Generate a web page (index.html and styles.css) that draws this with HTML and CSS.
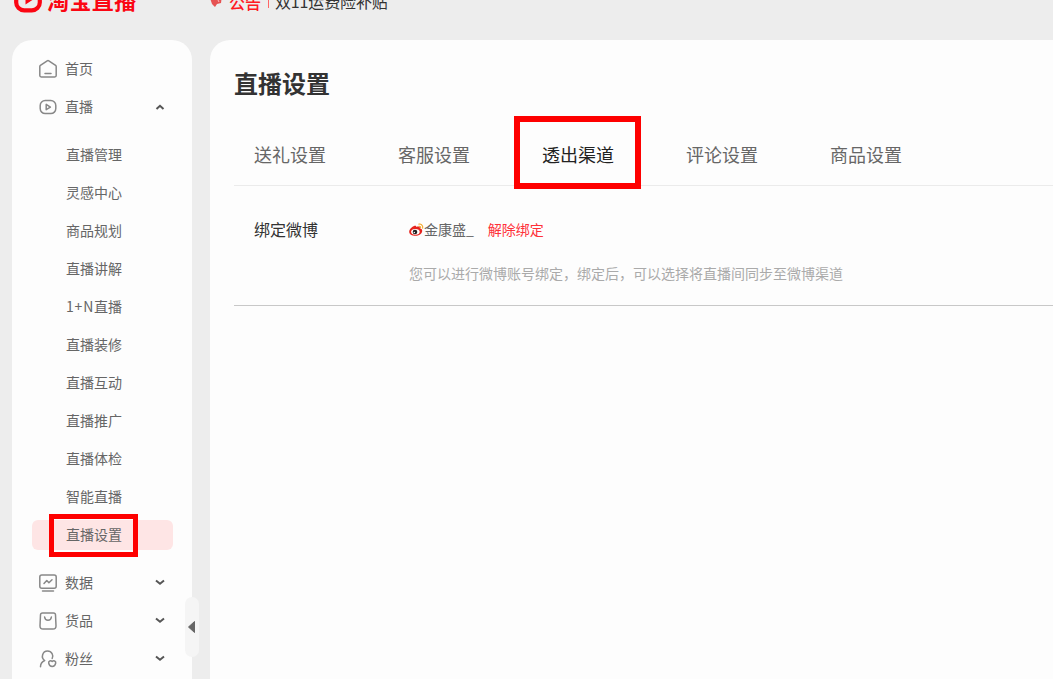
FILE: index.html
```html
<!DOCTYPE html>
<html lang="zh-CN">
<head>
<meta charset="utf-8">
<title>直播设置</title>
<link rel="stylesheet" href="styles.css">
</head>
<body>
<header class="topbar">
  <div class="brand">
    <svg class="brand-icon" width="28" height="26" viewBox="0 0 28 26"><rect x="2.2" y="2.2" width="23.6" height="21.2" rx="8" fill="none" stroke="#fb0613" stroke-width="4.2"/><path d="M11.500 7v10.500l8-5.200z" fill="#fb0613"/></svg>
    <span class="brand-name">淘宝直播</span>
  </div>
  <div class="notice">
    <svg class="notice-icon" width="14" height="14" viewBox="0 0 14 14"><path d="M0 4l12-3-1 8-4 1-2 3-3-3z" fill="#e65252"/><path d="M8 6l1 2" stroke="#fbb" stroke-width="1"/></svg>
    <b class="notice-tag">公告</b>
    <i class="notice-line"></i>
    <span class="notice-text">双11运费险补贴</span>
  </div>
</header>
<div class="layout">
  <aside class="sidebar">
    <nav>
      <a class="item"><svg class="icon" viewBox="0 0 20 20"><path d="M1.8 7.4Q1.8 6.7 2.4 6.3L9.2 1.8Q10 1.3 10.8 1.8L17.6 6.3Q18.2 6.7 18.2 7.4V16.6Q18.2 18 16.8 18H3.2Q1.8 18 1.8 16.600ZM7 14.500h6"/></svg><span class="text">首页</span></a>
      <a class="item"><svg class="icon" viewBox="0 0 20 20"><rect x="2.2" y="3.6" width="15.600" height="13" rx="5"/><path d="M8.200 7.400v5.300l4.200-2.600z"/></svg><span class="text">直播</span><svg class="arrow" viewBox="0 0 10 8"><path d="M1.500 6L5 2.800 8.500 6"/></svg></a>
      <div class="submenu">
        <a class="sub">直播管理</a>
        <a class="sub">灵感中心</a>
        <a class="sub">商品规划</a>
        <a class="sub">直播讲解</a>
        <a class="sub"><span class="latin">1+N</span>直播</a>
        <a class="sub">直播装修</a>
        <a class="sub">直播互动</a>
        <a class="sub">直播推广</a>
        <a class="sub">直播体检</a>
        <a class="sub">智能直播</a>
        <a class="sub active"><span>直播设置</span><i class="mark mark-menu"></i></a>
      </div>
      <a class="item"><svg class="icon" viewBox="0 0 20 20"><rect x="1.800" y="2" width="16.400" height="13.200" rx="2"/><path d="M6 10.500l2.800-3 2.100 2.200L14 6.700M4.500 17.900h11"/></svg><span class="text">数据</span><svg class="arrow" viewBox="0 0 10 8"><path d="M1 1.500L5 4.700l4-3.200"/></svg></a>
      <a class="item"><svg class="icon" viewBox="0 0 20 20"><path d="M4.500 1.900h11q1.900 0 2 1.900l.5 11q.1 3.300-3 3.300H5q-3.100 0-3-3.300l.5-11q.1-1.900 2-1.900zM6.600 6c.6 4.300 6.200 4.300 6.800 0"/></svg><span class="text">货品</span><svg class="arrow" viewBox="0 0 10 8"><path d="M1 1.500L5 4.700l4-3.200"/></svg></a>
      <a class="item"><svg class="icon" viewBox="0 0 20 20"><path d="M2.500 17.700c0-3.300 1.500-5 4.200-6.200C2.500 8.700 4.500 2 9.500 2c4.400 0 6.300 4.500 4.700 7.500"/><path d="M14.200 12.400c1.300-1.300 4-.5 3.500 1.700-.4 1.900-2 3.400-3.500 3.400s-3.100-1.500-3.500-3.400c-.5-2.200 2.200-3 3.500-1.700z"/></svg><span class="text">粉丝</span><svg class="arrow" viewBox="0 0 10 8"><path d="M1 1.500L5 4.700l4-3.200"/></svg></a>
    </nav>
    <button class="collapse"><svg width="7" height="12" viewBox="0 0 7 12"><path d="M6.500.5v11L.5 6z" fill="#666" stroke="#666" stroke-linejoin="round"/></svg></button>
  </aside>
  <main class="panel">
    <h1 class="title">直播设置</h1>
    <div class="tabs">
      <a class="tab">送礼设置</a>
      <a class="tab">客服设置</a>
      <a class="tab current">透出渠道<i class="mark mark-tab"></i></a>
      <a class="tab">评论设置</a>
      <a class="tab">商品设置</a>
    </div>
    <section class="binding">
      <div class="label">绑定微博</div>
      <div>
        <div class="account">
          <svg class="weibo" width="15" height="14" viewBox="0 0 15 14"><path d="M5.500 2.800c1-.4 2 0 1.700 1.200 2-.8 4-.5 3.700 1.200 1.600.4 2.400 1.300 2.300 2.700-.2 2.800-3.300 4.900-6.700 4.900S.2 11.300.2 8.700c0-2.300 2.700-5 5.300-5.900z" fill="#e6231d"/><ellipse cx="6.400" cy="8.800" rx="4.300" ry="2.900" fill="#fff"/><circle cx="6" cy="9" r="2.300" fill="#222"/><circle cx="5.300" cy="9.500" r=".7" fill="#fff"/><path d="M9.400 1.200c3-.7 5 1.800 4.200 4.400M9.700 3.300c1.400-.3 2.200.6 1.900 1.800" fill="none" stroke="#f5a623" stroke-width="1.100"/></svg>
          <span class="name">金康盛_</span>
          <a class="unbind">解除绑定</a>
        </div>
        <p class="hint">您可以进行微博账号绑定，绑定后，可以选择将直播间同步至微博渠道</p>
      </div>
    </section>
  </main>
</div>
</body>
</html>
```
FILE: styles.css
```css
* { box-sizing: border-box; }
body {
  margin: 0;
  height: 679px;
  overflow: hidden;
  background: #ededed;
  color: #666;
  font: 14px/20px "Noto Sans CJK SC", sans-serif;
}
i { font-style: normal; }
.topbar {
  display: flex;
  height: 40px;
  padding-left: 14px;
  overflow: hidden;
}
.brand { display: flex; width: 195px; gap: 5px; }
.brand-icon { flex: none; margin-top: -13px; }
.brand-name {
  margin-top: -18px;
  color: #fb0613;
  font-size: 22px;
  line-height: 34px;
  font-weight: 700;
  letter-spacing: .4px;
  white-space: nowrap;
}
.notice { display: flex; white-space: nowrap; font-size: 16px; line-height: 24px; }
.notice-icon { margin: -6px 5px 0 1px; }
.notice-tag { margin-top: -10px; color: #ff1a24; font-weight: 500; }
.notice-line { width: 1px; height: 8px; margin: 0 6px 0 7px; background: #f66; }
.notice-text { margin-top: -11px; color: #333; letter-spacing: -.15px; }
.layout { display: flex; height: 639px; padding-left: 12px; gap: 18px; }
.sidebar {
  position: relative;
  flex: none;
  width: 180px;
  padding-top: 10px;
  border-radius: 20px 20px 0 0;
  background: #fdfdfd;
}
.item {
  display: flex;
  align-items: center;
  height: 38px;
  padding: 0 27px 0 26px;
}
.text { padding-bottom: 2px; }
.icon {
  width: 20px;
  height: 20px;
  margin-right: 7px;
  fill: none;
  stroke: #888;
  stroke-width: 1.5;
  stroke-linecap: round;
  stroke-linejoin: round;
}
.arrow {
  width: 10px;
  height: 8px;
  margin-left: auto;
  fill: none;
  stroke: #555;
  stroke-width: 2;
}
.submenu { display: grid; gap: 8px; padding: 14px 19px 14px 20px; }
.sub { height: 30px; padding-left: 34px; line-height: 28px; border-radius: 6px; }
.latin { letter-spacing: .8px; }
.active { position: relative; background: #fee5e5; }
.mark { position: absolute; border: 6px solid #fe0000; }
.mark-menu { left: 17px; top: -6px; width: 89px; height: 43px; border-width: 5px; }
.collapse {
  position: absolute;
  left: 173px;
  top: 557px;
  width: 14px;
  height: 60px;
  padding: 0 3px;
  display: flex;
  align-items: center;
  border: 0;
  border-radius: 7px;
  background: #f5f5f5;
}
.panel {
  flex: 1;
  min-width: 0;
  padding: 25px 0 0 24px;
  border-radius: 20px 0 0 0;
  background: #fdfdfd;
}
.title { margin: 0; color: #333; font-size: 24px; line-height: 36px; font-weight: 700; }
.tabs {
  display: flex;
  gap: 72px;
  height: 85px;
  padding: 39px 0 0 20px;
  border-bottom: 1px solid #ebebeb;
}
.tab { position: relative; font-size: 18px; line-height: 28px; }
.current { color: #222; }
.mark-tab { left: -28px; top: -24px; width: 127px; height: 73px; }
.binding {
  display: grid;
  grid-template-columns: 155px 1fr;
  height: 120px;
  padding: 33px 0 0 20px;
  border-bottom: 1px solid #c8c8c8;
}
.label { color: #333; font-size: 16px; }
.account { display: flex; align-items: center; height: 20px; }
.weibo { margin-top: 2px; }
.name { margin-right: 14px; }
.unbind { color: #ff3038; }
.hint { margin: 24px 0 0; color: #aaa; white-space: nowrap; }
```
